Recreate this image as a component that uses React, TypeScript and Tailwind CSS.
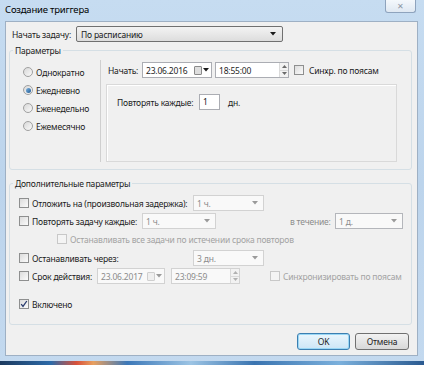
import React from 'react';

const Arrow = ({ disabled }: { disabled?: boolean }) => (
  <svg width="6" height="4" viewBox="0 0 6 4" className="shrink-0">
    <path d="M0 0h6L3 3.5z" fill={disabled ? '#9a9a9a' : '#1a1a1a'} />
  </svg>
);

const Checkbox = ({ checked, disabled }: { checked?: boolean; disabled?: boolean }) => (
  <div
    className={`w-[10px] h-[10px] shrink-0 border flex items-center justify-center ${
      disabled
        ? 'border-[#c8c8c8] bg-[#f4f4f4]'
        : 'border-[#8e8f8f] bg-gradient-to-br from-[#dcdcdc] to-[#fbfbfb]'
    }`}
  >
    {checked && (
      <svg width="8" height="8" viewBox="0 0 8 8">
        <path d="M1.2 4.2l1.8 2.2L6.8 1" fill="none" stroke="#2a3c6e" strokeWidth="1.3" />
      </svg>
    )}
  </div>
);

const Radio = ({ checked }: { checked?: boolean }) => (
  <div className="w-[10px] h-[10px] shrink-0 rounded-full border border-[#a0a0a0] bg-gradient-to-br from-[#d8d8d8] to-[#fafafa] flex items-center justify-center">
    {checked && <div className="w-[5px] h-[5px] rounded-full bg-gradient-to-br from-[#7fb4e0] to-[#1c5a93]" />}
  </div>
);

const Combo = ({ value, w, disabled, dark }: { value: string; w: string; disabled?: boolean; dark?: boolean }) => (
  <div
    className={`${w} h-[16px] shrink-0 flex items-center justify-between pl-[3px] pr-[5px] border ${
      dark ? 'border-[#b4b6bb]' : 'border-[#d2d2d2]'
    } ${disabled ? 'bg-[#f9f9f9] text-[#8c8c8c]' : 'bg-white'}`}
  >
    <span>{value}</span>
    <Arrow disabled={disabled} />
  </div>
);

const DateBox = ({ value, w, disabled }: { value: string; w: string; disabled?: boolean }) => (
  <div
    className={`${w} h-[16px] shrink-0 flex items-center justify-between pl-[3px] pr-[2px] border ${
      disabled ? 'border-[#d2d2d2] bg-[#f9f9f9] text-[#8c8c8c]' : 'border-[#abadb3] bg-white text-[#1e1e1e]'
    }`}
  >
    <span>{value}</span>
    <div className="flex items-center gap-[1px]">
      <div
        className={`w-[8px] h-[9px] border rounded-[1px] ${
          disabled ? 'border-[#cfcfcf] bg-[#efefef]' : 'border-[#8a8a8a] bg-[#dedede]'
        }`}
      />
      <Arrow disabled={disabled} />
    </div>
  </div>
);

const TimeBox = ({ value, w, disabled }: { value: string; w: string; disabled?: boolean }) => (
  <div
    className={`${w} h-[16px] shrink-0 flex items-center justify-between pl-[3px] border ${
      disabled ? 'border-[#d2d2d2] bg-[#f9f9f9] text-[#8c8c8c]' : 'border-[#abadb3] bg-white text-[#1e1e1e]'
    }`}
  >
    <span>{value}</span>
    <div className="w-[9px] h-full flex flex-col border-l border-[#dadada] bg-[#f2f2f2]">
      <div className="flex-1 flex items-center justify-center border-b border-[#dadada]">
        <svg width="5" height="3" viewBox="0 0 5 3">
          <path d="M0 3h5L2.5 0z" fill={disabled ? '#b0b0b0' : '#6a6a6a'} />
        </svg>
      </div>
      <div className="flex-1 flex items-center justify-center">
        <svg width="5" height="3" viewBox="0 0 5 3">
          <path d="M0 0h5L2.5 3z" fill={disabled ? '#b0b0b0' : '#6a6a6a'} />
        </svg>
      </div>
    </div>
  </div>
);

export default function App() {
  return (
    <div className="w-[424px] h-[365px] flex flex-col overflow-hidden whitespace-nowrap bg-gradient-to-b from-[#c6dcf1] via-[#bcd4ec] to-[#c3d9ef] font-['Noto_Sans',sans-serif] text-[8.5px] tracking-[-0.2px] leading-[11px] text-[#1b1b1b]">
      {/* title bar */}
      <div className="h-[21px] shrink-0 flex items-start justify-between">
        <span className="pl-[5px] pt-[4px] text-[9.5px] leading-[12px] text-black">Создание триггера</span>
        <div className="mr-[8px] w-[31px] h-[13px] rounded-b-[3px] border border-t-0 border-[#8ea3bd] bg-gradient-to-b from-[#f4f8fc] to-[#dfe8f2] flex items-center justify-center">
          <span className="text-[8px] leading-none text-[#8c96a3]">✕</span>
        </div>
      </div>

      {/* client area */}
      <div className="ml-[5px] w-[413px] h-[335px] shrink-0 border border-[#9eb0c4] bg-[#f0f0f0] flex flex-col">
        <div className="mt-[4px] flex items-center">
          <span className="pl-[6px] w-[70px]">Начать задачу:</span>
          <div className="w-[207px] h-[16px] flex items-center justify-between pl-[4px] pr-[6px] border border-[#707070] rounded-[2px] bg-gradient-to-b from-[#f3f3f3] to-[#dddddd]">
            <span>По расписанию</span>
            <Arrow />
          </div>
        </div>

        {/* Параметры */}
        <fieldset className="ml-[3px] w-[403px] mt-[2px] border border-[#d5dfe5] rounded-[3px]">
          <legend className="ml-[3px] px-[2px] leading-[13px]">Параметры</legend>
          <div className="h-[112px] flex">
            <div className="w-[91px] mt-[3px] h-[102px] border-r border-[#cfcfcf] flex flex-col pt-[3px] pl-[13px]">
              {[
                ['Однократно', false],
                ['Ежедневно', true],
                ['Еженедельно', false],
                ['Ежемесячно', false],
              ].map(([label, on]) => (
                <div key={label as string} className="h-[18px] flex items-center gap-[3px]">
                  <Radio checked={on as boolean} />
                  <span>{label}</span>
                </div>
              ))}
            </div>
            <div className="flex flex-col">
              <div className="mt-[5px] flex items-center pl-[7px]">
                <span className="w-[34px]">Начать:</span>
                <DateBox value="23.06.2016" w="w-[70px]" />
                <div className="ml-[3px]">
                  <TimeBox value="18:55:00" w="w-[74px]" />
                </div>
                <div className="ml-[5px] flex items-center gap-[5px]">
                  <Checkbox />
                  <span>Синхр. по поясам</span>
                </div>
              </div>
              <div className="ml-[5px] mt-[6px] w-[291px] h-[78px] border border-[#d9d9d9] shadow-[inset_1px_1px_0_#ffffff] pt-[9px] pl-[10px]">
                <div className="flex items-center">
                  <span className="w-[82px]">Повторять каждые:</span>
                  <div className="w-[21px] h-[16px] border border-[#abadb3] bg-white pl-[3px] leading-[14px]">1</div>
                  <span className="ml-[8px]">дн.</span>
                </div>
              </div>
            </div>
          </div>
        </fieldset>

        {/* Дополнительные параметры */}
        <fieldset className="ml-[3px] w-[403px] mt-[7px] border border-[#d5dfe5] rounded-[3px]">
          <legend className="ml-[3px] px-[2px] leading-[13px]">Дополнительные параметры</legend>
          <div className="flex flex-col pt-[4px] pb-[11px] pl-[9px]">
            <div className="h-[18px] flex items-center">
              <div className="w-[174px] flex items-center gap-[3px]">
                <Checkbox />
                <span>Отложить на (произвольная задержка):</span>
              </div>
              <Combo value="1 ч." w="w-[71px]" disabled />
            </div>
            <div className="h-[18px] flex items-center">
              <div className="w-[123px] flex items-center gap-[3px]">
                <Checkbox />
                <span>Повторять задачу каждые:</span>
              </div>
              <Combo value="1 ч." w="w-[74px]" disabled />
              <span className="ml-[74px] w-[45px] text-[#8c8c8c]">в течение:</span>
              <Combo value="1 д." w="w-[68px]" disabled dark />
            </div>
            <div className="h-[18px] flex items-center gap-[3px] pl-[38px] text-[#a3a3a3]">
              <Checkbox disabled />
              <span>Останавливать все задачи по истечении срока повторов</span>
            </div>
            <div className="mt-[1px] h-[18px] flex items-center">
              <div className="w-[174px] flex items-center gap-[3px]">
                <Checkbox />
                <span>Останавливать через:</span>
              </div>
              <Combo value="3 дн." w="w-[71px]" disabled />
            </div>
            <div className="h-[18px] flex items-center">
              <div className="w-[78px] flex items-center gap-[3px]">
                <Checkbox />
                <span>Срок действия:</span>
              </div>
              <DateBox value="23.06.2017" w="w-[68px]" disabled />
              <div className="ml-[6px]">
                <TimeBox value="23:09:59" w="w-[69px]" disabled />
              </div>
              <div className="ml-[30px] flex items-center gap-[3px] text-[#a3a3a3]">
                <Checkbox disabled />
                <span>Синхронизировать по поясам</span>
              </div>
            </div>
            <div className="mt-[10px] h-[18px] flex items-center gap-[3px]">
              <Checkbox checked />
              <span>Включено</span>
            </div>
          </div>
        </fieldset>

        <div className="mt-[8px] flex justify-end gap-[5px] pr-[8px]">
          <button className="w-[53px] h-[17px] rounded-[3px] border border-[#3c7fb1] shadow-[inset_0_0_0_1px_#9ad7f5] bg-gradient-to-b from-[#eaf6fd] to-[#cde6f6] text-[8.5px]">
            OK
          </button>
          <button className="w-[54px] h-[17px] rounded-[3px] border border-[#707070] bg-gradient-to-b from-[#f2f2f2] to-[#d8d8d8] text-[8.5px]">
            Отмена
          </button>
        </div>
      </div>

      <div className="h-[5px] shrink-0" />
      <div className="flex-1 bg-[linear-gradient(to_right,#1c3a5e_0%,#2c6aa8_12%,#d8503a_18%,#e8a060_22%,#3c78b8_30%,#9cc4e4_45%,#3a74b0_60%,#7bb0dc_80%,#2a5a90_100%)]" />
    </div>
  );
}
